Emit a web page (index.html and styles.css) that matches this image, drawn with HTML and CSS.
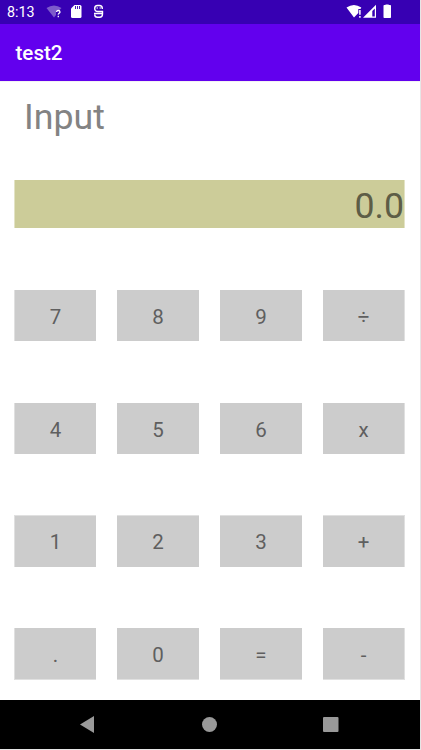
FILE: index.html
```html
<!DOCTYPE html>
<html lang="en">
<head>
<meta charset="utf-8">
<title>test2</title>
<link rel="stylesheet" href="styles.css">
</head>
<body>
<div class="phone">
  <header class="status">
    <span class="time">8:13</span>
    <svg class="left-icons" width="60" height="24" viewBox="46 0 60 24">
      <path d="M46.500 8Q54 3 61.500 8L59.500 10H56V15L54 17.500Z" fill="#7d5bcb"/>
      <path d="M56.500 12Q56.500 10.500 58.200 10.500T60 12Q60 12.700 59.100 13.300T58.300 14.700M58.300 15.800V17.200" fill="none" stroke="#fff" stroke-width="1.300"/>
      <path d="M74.500 5H80Q81.500 5 81.500 6.500V16.500Q81.500 18 80 18H72.500Q71 18 71 16.500V8.500Z" fill="#fff"/>
      <path d="M75.500 6V9M77.500 6V9M79.500 6V9" stroke="#3700b3" stroke-width=".9"/>
      <path d="M102.300 9V8.500Q102.300 5.500 99.500 5.500H97.500Q94.700 5.500 94.700 8.500Q94.700 11.500 98 11.500H99.500M94 13.500H102.500V14Q102.500 17.300 99.500 17.300H97.500Q94.700 17.300 94.700 14.500M99 11.500H102.500V13.500" fill="none" stroke="#fff" stroke-width="1.400"/>
      <path d="M96.500 8H98M99.500 8H101" stroke="#fff" stroke-width="1"/>
    </svg>
    <svg class="right-icons" width="48" height="24" viewBox="346 0 48 24">
      <path d="M346.500 7.500Q354 2.300 361.300 7.500L360.500 9H358.300V13L354 17.500Z" fill="#fff"/>
      <path d="M359.900 10V14.800M359.900 16V17.700" stroke="#fff" stroke-width="1.500"/>
      <path d="M363 17.700L376 4.700V17.700Z" fill="#fff"/>
      <path d="M372.300 11L374.800 8.500V16.500H372.300Z" fill="#3700b3"/>
      <path d="M385.500 5V4.500H388.700V5H390.200Q391 5 391 5.800V17.200Q391 18 390.200 18H384.300Q383.500 18 383.500 17.200V5.800Q383.500 5 384.300 5Z" fill="#fff"/>
    </svg>
  </header>
  <div class="appbar">test2</div>
  <main class="content">
    <div class="label">Input</div>
    <div class="display">0.0</div>
    <div class="keys">
      <div class="row"><div class="key">7</div><div class="key">8</div><div class="key">9</div><div class="key">÷</div></div>
      <div class="row"><div class="key">4</div><div class="key">5</div><div class="key">6</div><div class="key">x</div></div>
      <div class="row soft-top"><div class="key">1</div><div class="key">2</div><div class="key">3</div><div class="key">+</div></div>
      <div class="row soft-bottom"><div class="key">.</div><div class="key">0</div><div class="key">=</div><div class="key">-</div></div>
    </div>
  </main>
  <nav class="nav">
    <svg width="420" height="49" viewBox="0 0 420 49">
      <path d="M80 24.500L94 16V33Z" fill="#999"/>
      <circle cx="209.500" cy="24.500" r="7.500" fill="#999"/>
      <rect x="323" y="17" width="15.500" height="15" rx="1" fill="#999"/>
    </svg>
  </nav>
</div>
</body>
</html>
```

FILE: styles.css
```css
* { box-sizing: border-box; }
body {
  margin: 0;
  height: 750px;
  overflow: hidden;
  background: #e6e6e6;
  font-family: Roboto, "Liberation Sans", sans-serif;
}
.phone {
  width: 420px;
  height: 749px;
  display: flex;
  flex-direction: column;
  background: #fff;
}
.status {
  height: 24px;
  display: flex;
  align-items: center;
  padding-left: 7px;
  background: #3700b3;
  color: #fff;
}
.time { width: 39px; font-size: 14.3px; line-height: 24px; }
.right-icons { margin-left: 240px; }
.appbar {
  height: 57px;
  padding-left: 15.5px;
  background: #6200ee;
  color: #fff;
  font-size: 20.6px;
  font-weight: 500;
  line-height: 58px;
}
.content {
  flex: 1;
  padding: 0 15px 0 14px;
  border-top: 1px solid #f3f3f3;
}
.label {
  height: 98px;
  padding: 14px 0 0 10px;
  color: #838383;
  font-size: 35.7px;
  line-height: 42px;
}
.display {
  height: 48px;
  border: solid #e3e3c5;
  border-width: 0 1px 0 1px;
  background: #cccc99;
  color: #5d5d46;
  font-size: 35.7px;
  line-height: 53px;
  text-align: right;
}
.keys {
  display: grid;
  grid-template-rows: 51px 51px 52px 52px;
  row-gap: 61px;
  margin-top: 62px;
}
.row {
  display: grid;
  grid-template-columns: repeat(4, 82px);
  grid-template-rows: 100%;
  column-gap: 21px;
}
.row:nth-child(n + 2) { position: relative; top: 1px; }
.key {
  background: #ccc;
  color: #5f5f5f;
  font-size: 20.5px;
  line-height: 55px;
  text-align: center;
}
.key:first-child { border-left: 1px solid #e0e0e0; }
.key:last-child { border-right: 1px solid #e0e0e0; }
.soft-top .key { border-top: 1px solid #e0e0e0; line-height: 53px; }
.soft-bottom .key { border-bottom: 1px solid #e0e0e0; }
.nav { height: 49px; background: #000; }
.nav svg { display: block; }
```
